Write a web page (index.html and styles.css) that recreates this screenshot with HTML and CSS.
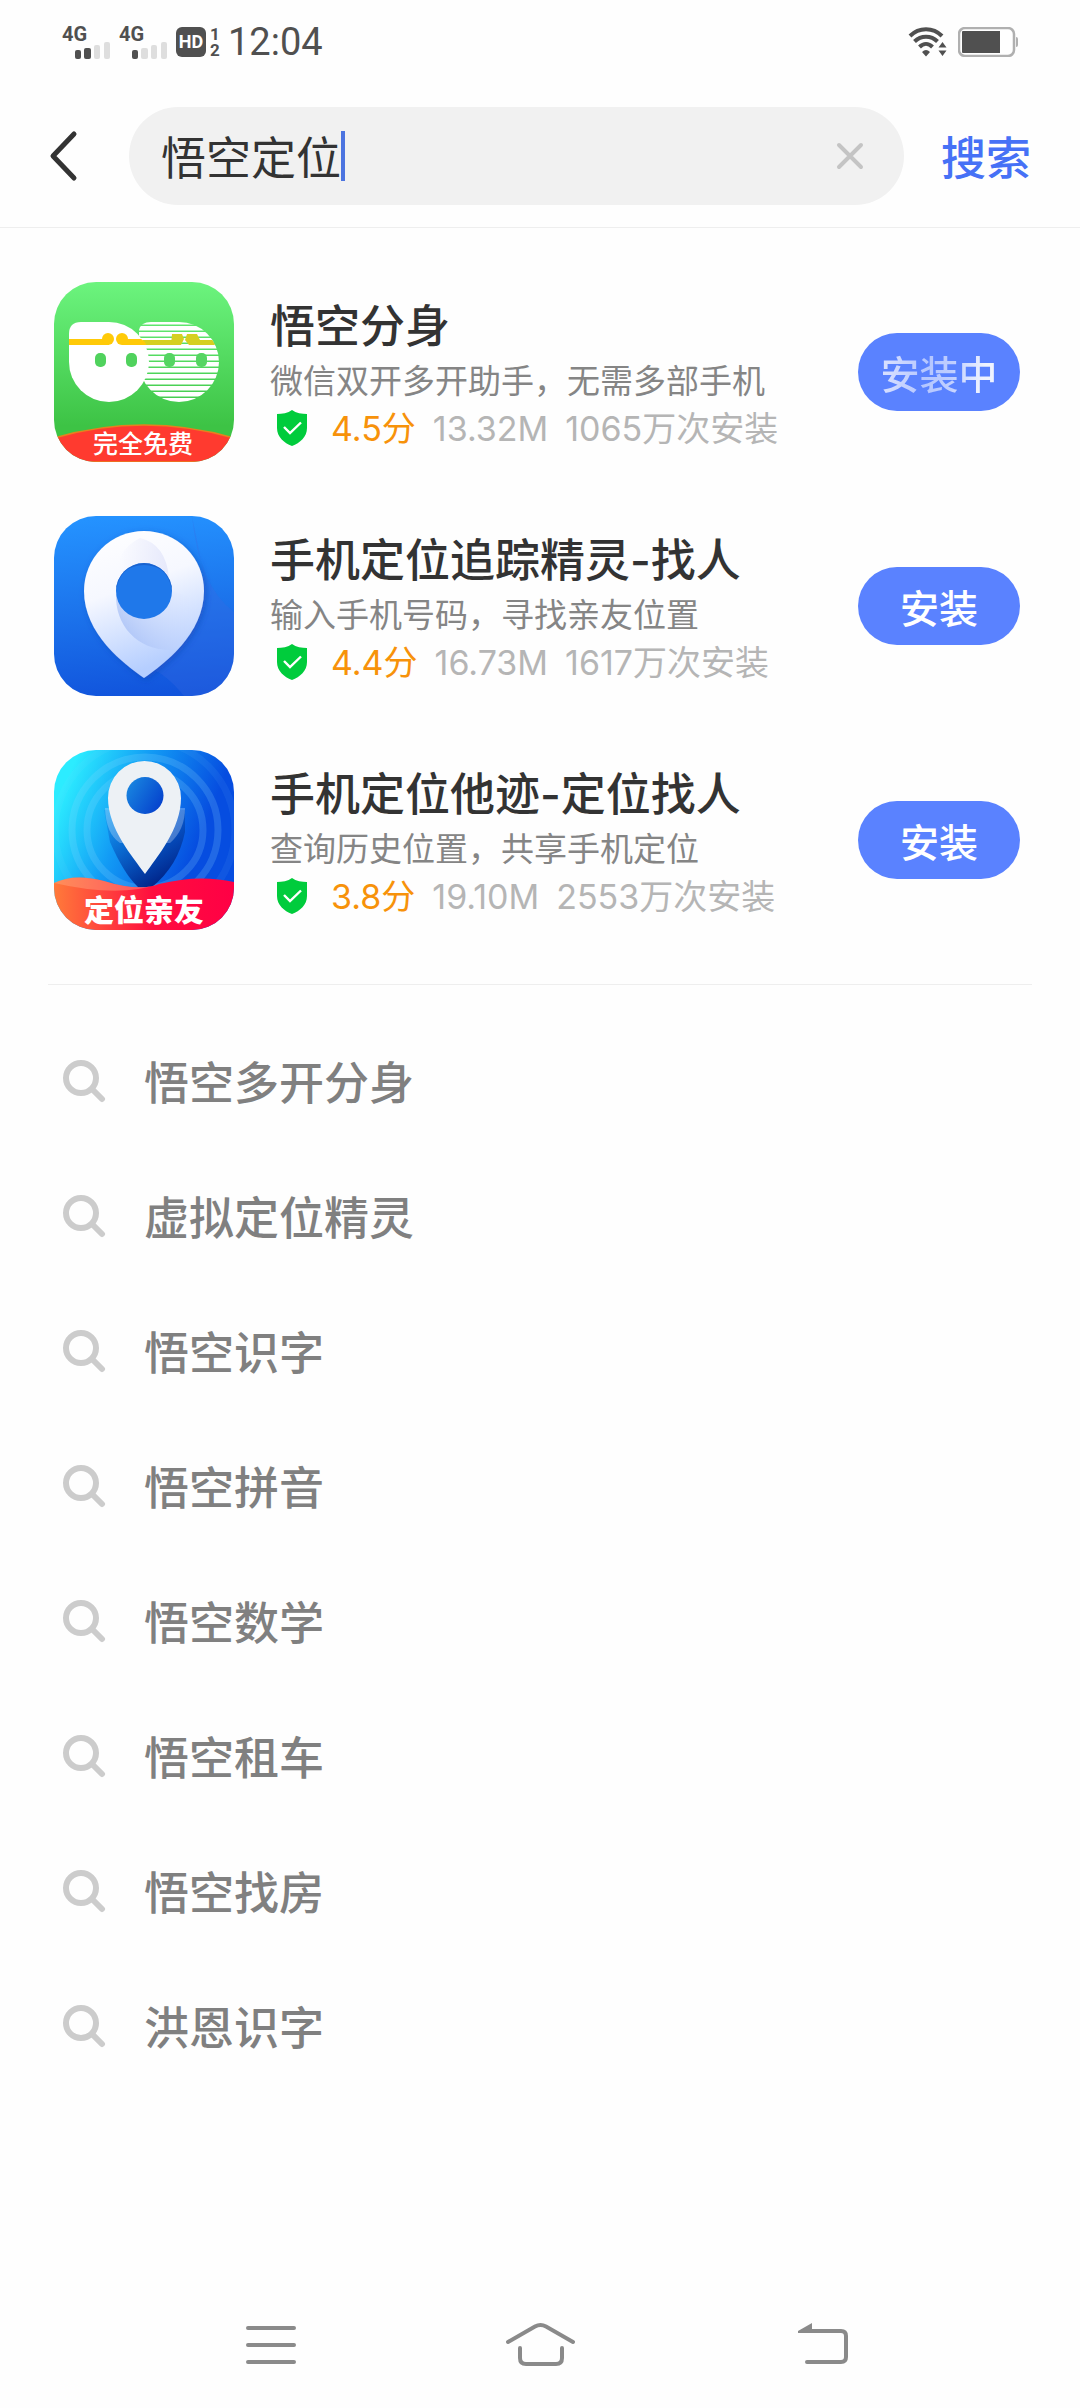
FILE: index.html
```html
<!DOCTYPE html>
<html lang="zh-CN">
<head>
<meta charset="utf-8">
<meta name="viewport" content="width=device-width, initial-scale=1">
<title>悟空定位 - 搜索</title>
<link rel="stylesheet" href="styles.css">
</head>
<body>
<svg class="defs" aria-hidden="true">
  <symbol id="shield" viewBox="0 0 32 36">
    <path fill="#00cc3c" d="M16 0C20 3 26 4 31 4V18C31 27 24 33 16 36C8 33 1 27 1 18V4C6 4 12 3 16 0Z"/>
    <path fill="none" stroke="#fff" stroke-width="2.4" d="M8 17l6 6L25 12.500"/>
  </symbol>
  <symbol id="magnifier" viewBox="0 0 44 44">
    <circle cx="19" cy="19" r="15" fill="none" stroke="#ccc" stroke-width="6"/>
    <path d="M30 30l10 10" stroke="#ccc" stroke-width="6" stroke-linecap="round"/>
  </symbol>
</svg>

<div class="status">
  <div class="status-left">
    <div class="signal"><span class="signal-type">4G</span>
      <svg width="36" height="18" viewBox="0 0 36 18"><g fill="#505050"><rect y="8" width="6" height="9" rx="2"/><rect x="9" y="6" width="7" height="11" rx="2"/></g><g fill="#dedede"><rect x="19" y="3" width="6" height="14" rx="2"/><rect x="29" width="6" height="17" rx="2"/></g></svg>
    </div>
    <div class="signal"><span class="signal-type">4G</span>
      <svg width="36" height="18" viewBox="0 0 36 18"><rect y="8" width="6" height="9" rx="2" fill="#505050"/><g fill="#dedede"><rect x="9" y="6" width="7" height="11" rx="2"/><rect x="19" y="3" width="6" height="14" rx="2"/><rect x="29" width="6" height="17" rx="2"/></g></svg>
    </div>
    <span class="hd">HD</span>
    <span class="sims"><span>1</span><span>2</span></span>
    <time class="clock">12:04</time>
  </div>
  <div class="status-right">
    <svg width="40" height="30" viewBox="0 0 40 30"><g fill="none" stroke="#505050" stroke-width="4"><path d="M2 9C11 0 25 0 34 9"/><path d="M6.500 14.500C13 8 23 8 29.500 14.500"/><path d="M11.500 20C15.500 16 20.500 16 24.500 20"/></g><path fill="#505050" d="M14 25Q18 21 22 25L18 29.500ZM34.500 15l4 5.500h-8ZM34.500 29l4-5.500h-8Z"/></svg>
    <svg width="60" height="30" viewBox="0 0 60 30"><rect x="1" y="1" width="55" height="28" rx="6" fill="#fff" stroke="#b0b0b0" stroke-width="2.500"/><path fill="#505050" d="M4 5q0-1 1-1h37v22H5q-1 0-1-1z"/><path fill="#b0b0b0" d="M58 10q2 0 2 2v6q0 2-2 2z"/></svg>
  </div>
</div>

<form class="search" role="search">
  <button class="back" type="button" aria-label="返回"><svg width="30" height="52" viewBox="0 0 30 52"><path d="M25 4L4 26L25 48" fill="none" stroke="#333" stroke-width="5" stroke-linecap="round" stroke-linejoin="round"/></svg></button>
  <div class="field">
    <input class="query" type="text" value="悟空定位" aria-label="搜索应用">
    <span class="caret"></span>
    <button class="clear" type="button" aria-label="清除"><svg width="28" height="28" viewBox="0 0 28 28"><path d="M3 3L25 25M25 3L3 25" stroke="#c4c4c4" stroke-width="4" stroke-linecap="round"/></svg></button>
  </div>
  <button class="submit" type="submit">搜索</button>
</form>

<main>
  <ul class="apps">
    <li class="app">
      <svg class="app-icon" viewBox="0 0 180 180" role="img" aria-label="悟空分身">
        <defs>
          <linearGradient id="g1" x2="0" y2="1"><stop stop-color="#6cf47e"/><stop offset=".8" stop-color="#3dc345"/></linearGradient>
          <pattern id="stripes" width="180" height="6" y="2" patternUnits="userSpaceOnUse"><rect width="180" height="4.500" fill="#fff"/></pattern>
          <clipPath id="face2"><path d="M85 52q0-12 12-12H125a40 40 0 1 1-40 40z"/></clipPath>
        </defs>
        <rect width="180" height="180" fill="url(#g1)"/>
        <path d="M85 48q2-8 12-8H125a40 40 0 1 1-40 40z" fill="url(#stripes)"/>
        <g clip-path="url(#face2)" fill="#d6cf20"><rect x="84" y="58" width="40" height="5"/><rect x="138" y="58" width="30" height="5"/><path d="M118 52h10l2 5-3 6h-10zM133 52h10l3 6-3 5h-8l-4-5z"/></g>
        <g fill="#55d562"><rect x="110" y="71" width="11" height="14" rx="5"/><rect x="142" y="71" width="11" height="14" rx="5"/></g>
        <path d="M15 52q0-12 12-12H55a40 40 0 1 1-40 40z" fill="#fff"/>
        <g fill="#ffca08"><rect x="15" y="57" width="40" height="6"/><circle cx="54" cy="57" r="6"/><circle cx="68" cy="57" r="6"/><path d="M68 57h19q5 3 5 6H68z"/></g>
        <g fill="#50d25d"><rect x="41" y="71" width="11" height="14" rx="5"/><rect x="72" y="71" width="11" height="14" rx="5"/></g>
        <path d="M0 156Q90 130 180 156V180H0z" fill="#ff3a2f" stroke="#e8801e" stroke-width="1.500"/>
        <text class="badge-thin" x="89" y="171">完全免费</text>
      </svg>
      <div class="info">
        <h2 class="name">悟空分身</h2>
        <p class="desc">微信双开多开助手，无需多部手机</p>
        <p class="meta"><svg class="shield"><use href="#shield"/></svg><span class="score">4.5分</span><span>13.32M</span><span>1065万次安装</span></p>
      </div>
      <button class="install" type="button"><span class="busy">安装中</span></button>
    </li>
    <li class="app">
      <svg class="app-icon" viewBox="0 0 180 180" role="img" aria-label="手机定位追踪精灵">
        <defs>
          <linearGradient id="g2" x1=".4" x2=".5" y2="1"><stop stop-color="#2492ff"/><stop offset=".5" stop-color="#1c74ec"/><stop offset="1" stop-color="#1154dc"/></linearGradient>
          <linearGradient id="p2" x2=".3" y2="1"><stop stop-color="#fff"/><stop offset=".45" stop-color="#f6f8ff"/><stop offset="1" stop-color="#b5ceff"/></linearGradient>
          <linearGradient id="q2" x1="0" y1=".7" x2="1" y2=".3"><stop stop-color="#9db8f4"/><stop offset="1" stop-color="#dfe8ff" stop-opacity="0"/></linearGradient>
          <linearGradient id="r2" x2="1"><stop stop-color="#e4e6fa" stop-opacity="0"/><stop offset="1" stop-color="#e2e5fa"/></linearGradient>
          <filter id="s2" x="-20%" y="-20%" width="140%" height="140%"><feDropShadow dy="2" stdDeviation="3" flood-color="#0b3fae" flood-opacity=".5"/></filter>
        </defs>
        <rect width="180" height="180" fill="url(#g2)"/>
        <path d="M138 0Q145 70 180 96V180H130Q110 155 90 150L150 60Z" fill="#3d6be0" opacity=".3"/>
        <g filter="url(#s2)"><path d="M90 162C70 148 30 118 30 75a60 60 0 0 1 120 0C150 118 110 148 90 162Z" fill="url(#p2)"/></g>
        <path d="M62 78C61 110 84 136 121 134Q143 110 149 85L118 75Z" fill="url(#q2)" opacity=".8"/>
        <path d="M86 22Q112 28 115 62L90 47Q74 47 65 62Q60 35 86 22Z" fill="url(#r2)" opacity=".8"/>
        <circle cx="90" cy="75" r="28" fill="#1f78ea"/>
        <path d="M62 75a28 28 0 0 1 56 0q-4-26-28-26t-28 26" fill="#1559c4" opacity=".7"/>
      </svg>
      <div class="info">
        <h2 class="name">手机定位追踪精灵-找人</h2>
        <p class="desc">输入手机号码，寻找亲友位置</p>
        <p class="meta"><svg class="shield"><use href="#shield"/></svg><span class="score">4.4分</span><span>16.73M</span><span>1617万次安装</span></p>
      </div>
      <button class="install" type="button">安装</button>
    </li>
    <li class="app">
      <svg class="app-icon" viewBox="0 0 180 180" role="img" aria-label="手机定位他迹">
        <defs>
          <linearGradient id="g3" y1=".2" x2="1" y2=".6"><stop offset=".05" stop-color="#2cecff"/><stop offset=".4" stop-color="#129bf5"/><stop offset=".8" stop-color="#064de0"/></linearGradient>
          <linearGradient id="h3" x2="1"><stop stop-color="#ff7a3a"/><stop offset=".55" stop-color="#ff0d3f"/><stop offset="1" stop-color="#ff0045"/></linearGradient>
          <linearGradient id="k3" x2="1" y2=".6"><stop stop-color="#1b8de2"/><stop offset="1" stop-color="#0645ce"/></linearGradient>
          <linearGradient id="d3" x2=".6" y2="1"><stop stop-color="#0a70e0" stop-opacity=".2"/><stop offset="1" stop-color="#002488"/></linearGradient>
        </defs>
        <rect width="180" height="180" fill="url(#g3)"/>
        <g fill="none" stroke="#8fdcff" opacity=".2" stroke-width="7"><circle cx="91" cy="80" r="58"/><circle cx="91" cy="80" r="73"/><circle cx="91" cy="80" r="90" opacity=".4"/></g>
        <path d="M50 60L56 92Q70 124 84 137H98Q124 116 131 82V60Z" fill="url(#d3)"/>
        <path d="M51 58Q52 84 66 93L116 93Q131 80 131 58Z" fill="#d9eaff" opacity=".3"/>
        <path d="M91 124C79 107 54 79 54 48a36.500 37 0 0 1 73 0C127 79 103 107 91 124Z" fill="#edf1f5"/>
        <circle cx="91" cy="45.500" r="18.500" fill="url(#k3)"/>
        <path d="M0 133Q20 123 50 131Q85 142 105 134Q145 124 180 132V180H0z" fill="url(#h3)"/>
        <path d="M0 133Q20 123 50 131Q85 142 105 134Q65 148 0 133z" fill="#ffb08a" opacity=".4"/>
        <text class="badge-bold" x="90" y="171">定位亲友</text>
      </svg>
      <div class="info">
        <h2 class="name">手机定位他迹-定位找人</h2>
        <p class="desc">查询历史位置，共享手机定位</p>
        <p class="meta"><svg class="shield"><use href="#shield"/></svg><span class="score">3.8分</span><span>19.10M</span><span>2553万次安装</span></p>
      </div>
      <button class="install" type="button">安装</button>
    </li>
  </ul>

  <ul class="suggestions">
    <li><a href="#"><svg><use href="#magnifier"/></svg>悟空多开分身</a></li>
    <li><a href="#"><svg><use href="#magnifier"/></svg>虚拟定位精灵</a></li>
    <li><a href="#"><svg><use href="#magnifier"/></svg>悟空识字</a></li>
    <li><a href="#"><svg><use href="#magnifier"/></svg>悟空拼音</a></li>
    <li><a href="#"><svg><use href="#magnifier"/></svg>悟空数学</a></li>
    <li><a href="#"><svg><use href="#magnifier"/></svg>悟空租车</a></li>
    <li><a href="#"><svg><use href="#magnifier"/></svg>悟空找房</a></li>
    <li><a href="#"><svg><use href="#magnifier"/></svg>洪恩识字</a></li>
  </ul>
</main>

<nav class="system-nav">
  <button type="button" aria-label="最近任务"><svg width="90" height="90" viewBox="0 0 90 90"><path d="M21 28h46M21 45h46M21 62h46"/></svg></button>
  <button type="button" aria-label="主屏幕"><svg width="90" height="90" viewBox="0 0 90 90"><path d="M13 42L40 26.500Q45.500 23.500 51 26.500L78 42"/><path d="M25 48V58Q25 64 31 64H61Q67 64 67 58V48"/></svg></button>
  <button type="button" aria-label="返回上一页"><svg width="90" height="90" viewBox="0 0 90 90"><path d="M40 31H78Q83 31 83 36V57Q83 62 78 62H44"/><path class="arrow-head" d="M35 33V31L49 23V33Z"/></svg></button>
</nav>
</body>
</html>
```
FILE: styles.css
```css
* {
  box-sizing: border-box;
  margin: 0;
  padding: 0;
}

body {
  display: flex;
  flex-direction: column;
  min-height: 100vh;
  background: #fefefe;
  color: #333;
  font-family: "Noto Sans CJK SC", sans-serif;
}

ul {
  list-style: none;
}

svg {
  display: block;
  flex: none;
}

button {
  border: 0;
  background: none;
  font: inherit;
  cursor: pointer;
}

.defs {
  position: absolute;
  width: 0;
  height: 0;
}

/* Status bar */
.status {
  display: flex;
  justify-content: space-between;
  align-items: center;
  height: 84px;
  padding: 0 62px;
  color: #505050;
  font-family: Roboto, sans-serif;
}

.status-left,
.status-right {
  display: flex;
  align-items: center;
}

.status-right {
  gap: 10px;
}

.signal {
  width: 57px;
  height: 32px;
}

.signal-type {
  display: block;
  font-size: 20px;
  font-weight: 700;
  line-height: 16px;
}

.signal svg {
  margin-left: 13px;
}

.hd {
  width: 30px;
  height: 30px;
  border-radius: 6px;
  background: #505050;
  color: #fff;
  font-size: 18px;
  font-weight: 700;
  line-height: 30px;
  text-align: center;
}

.sims {
  display: flex;
  flex-direction: column;
  width: 22px;
  padding-left: 4px;
  font-size: 17px;
  font-weight: 700;
  line-height: 16px;
}

.clock {
  font-size: 38px;
  line-height: 44px;
}

/* Search bar */
.search {
  display: flex;
  align-items: center;
  height: 144px;
  padding: 0 49px;
  border-bottom: 1px solid #eee;
}

.back {
  width: 80px;
}

.field {
  display: flex;
  flex: 1;
  align-items: center;
  min-width: 0;
  height: 98px;
  padding: 0 40px 0 32px;
  border-radius: 49px;
  background: #f1f1f1;
}

.query {
  width: 4em;
  field-sizing: content;
  border: 0;
  outline: 0;
  background: none;
  color: #333;
  font: 45px/64px "Noto Sans CJK SC", sans-serif;
}

.caret {
  width: 4px;
  height: 50px;
  background: #4c74e0;
}

.clear {
  margin-left: auto;
}

.submit {
  margin-left: 37px;
  color: #4671f6;
  font-size: 45px;
  font-weight: 500;
  line-height: 64px;
}

/* Matching apps */
.apps {
  display: flex;
  flex-direction: column;
  gap: 54px;
  margin: 0 48px;
  padding: 54px 0;
  border-bottom: 1px solid #eee;
}

.app {
  display: flex;
  align-items: center;
  padding: 0 12px 0 6px;
}

.app-icon {
  width: 180px;
  height: 180px;
  border-radius: 42px;
}

.badge-thin,
.badge-bold {
  fill: #fff;
  font-size: 25px;
  font-weight: 500;
  text-anchor: middle;
}

.badge-bold {
  font-size: 30px;
  font-weight: 900;
}

.info {
  flex: 1;
  min-width: 0;
  height: 180px;
  padding: 12px 0 0 36px;
}

.name,
.meta {
  font-family: Inter, "Noto Sans CJK SC", sans-serif;
}

.name {
  font-size: 45px;
  font-weight: 500;
  line-height: 66px;
}

.desc {
  color: #858585;
  font-size: 33px;
  line-height: 38px;
}

.meta {
  display: flex;
  align-items: center;
  gap: 17px;
  color: #b5b5b5;
  font-size: 34px;
  line-height: 62px;
}

.shield {
  width: 32px;
  height: 36px;
  margin: 0 6px 2px;
}

.score {
  color: #f7920a;
}

.install {
  width: 162px;
  height: 78px;
  border-radius: 39px;
  background: #5a82ff;
  color: #fff;
  font-size: 39px;
  font-weight: 500;
  line-height: 78px;
}

.busy {
  background: linear-gradient(100deg, #d5deff 10%, #b4c6ff 40%, #c0ceff 60%, #eff3ff 85%);
  background-clip: text;
  color: transparent;
}

/* Suggested queries */
.suggestions {
  padding: 28px 48px;
}

.suggestions a {
  display: flex;
  align-items: center;
  gap: 38px;
  height: 135px;
  padding-left: 14px;
  color: #808080;
  font-size: 45px;
  font-weight: 500;
  text-decoration: none;
}

.suggestions svg {
  width: 44px;
  height: 44px;
}

/* System navigation */
.system-nav {
  display: flex;
  justify-content: space-between;
  margin-top: auto;
  padding: 0 21% 18px;
}

.system-nav path {
  fill: none;
  stroke: #8a8a8a;
  stroke-width: 4;
  stroke-linecap: round;
}

.system-nav .arrow-head {
  fill: #8a8a8a;
  stroke: none;
}
```
